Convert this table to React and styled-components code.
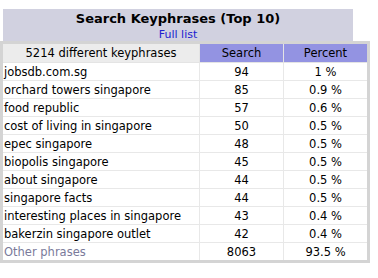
import React from "react";
import styled, { createGlobalStyle } from "styled-components";

const GlobalStyle = createGlobalStyle`
  body {
    margin: 0;
    background: #fff;
    font-family: "DejaVu Sans", Verdana, sans-serif;
  }
`;

const rows = [
  { phrase: "jobsdb.com.sg", search: 94, percent: "1 %" },
  { phrase: "orchard towers singapore", search: 85, percent: "0.9 %" },
  { phrase: "food republic", search: 57, percent: "0.6 %" },
  { phrase: "cost of living in singapore", search: 50, percent: "0.5 %" },
  { phrase: "epec singapore", search: 48, percent: "0.5 %" },
  { phrase: "biopolis singapore", search: 45, percent: "0.5 %" },
  { phrase: "about singapore", search: 44, percent: "0.5 %" },
  { phrase: "singapore facts", search: 44, percent: "0.5 %" },
  { phrase: "interesting places in singapore", search: 43, percent: "0.4 %" },
  { phrase: "bakerzin singapore outlet", search: 42, percent: "0.4 %" },
];

const Page = styled.div`
  padding-top: 9px;
`;

const TitleBox = styled.div`
  width: 350px;
  height: 32px;
  margin-left: 3px;
  background: #d1d1e0;
  display: flex;
  flex-direction: column;
  align-items: center;
  padding-top: 2px;
  box-sizing: border-box;
`;

const Title = styled.div`
  font-weight: bold;
  font-size: 13px;
  line-height: 16px;
  color: #000;
`;

const FullList = styled.a`
  font-size: 11px;
  line-height: 15px;
  color: #2020d0;
  text-decoration: none;
`;

const Table = styled.table`
  width: 370px;
  border: 3px solid #d4d4d4;
  border-collapse: collapse;
  font-size: 11.5px;
  table-layout: fixed;
`;

const HeadCell = styled.th`
  font-weight: normal;
  height: 18px;
  padding: 0;
  text-align: center;
  background: ${(p) => (p.$accent ? "#9393e2" : "#ececec")};
  color: #000;
  border: 1px solid #e4e4e4;
`;

const Cell = styled.td`
  height: 17px;
  padding: 0 ${(p) => (p.$left ? "1px" : "0")};
  text-align: ${(p) => (p.$left ? "left" : "center")};
  color: ${(p) => (p.$muted ? "#7a7a9a" : "#000")};
  border: 1px solid #e8e8e8;
  white-space: nowrap;
`;

export default function App() {
  return (
    <Page>
      <GlobalStyle />
      <TitleBox>
        <Title>Search Keyphrases (Top 10)</Title>
        <FullList href="#">Full list</FullList>
      </TitleBox>
      <Table>
        <colgroup>
          <col style={{ width: 198 }} />
          <col style={{ width: 84 }} />
          <col />
        </colgroup>
        <thead>
          <tr>
            <HeadCell>5214 different keyphrases</HeadCell>
            <HeadCell $accent>Search</HeadCell>
            <HeadCell $accent>Percent</HeadCell>
          </tr>
        </thead>
        <tbody>
          {rows.map((r) => (
            <tr key={r.phrase}>
              <Cell $left>{r.phrase}</Cell>
              <Cell>{r.search}</Cell>
              <Cell>{r.percent}</Cell>
            </tr>
          ))}
          <tr>
            <Cell $left $muted>Other phrases</Cell>
            <Cell>8063</Cell>
            <Cell>93.5 %</Cell>
          </tr>
        </tbody>
      </Table>
    </Page>
  );
}
